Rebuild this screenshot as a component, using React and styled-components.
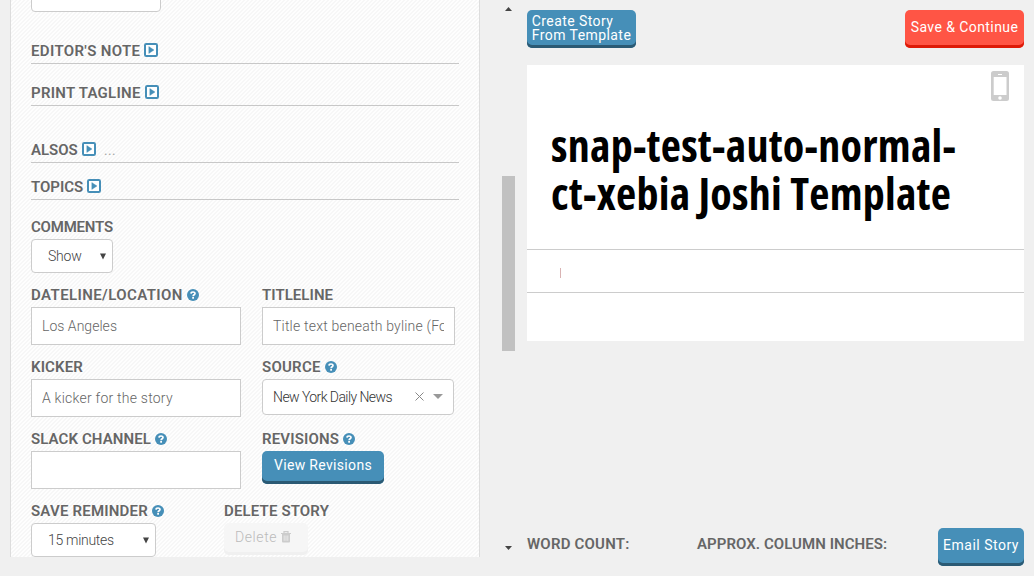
import React from 'react';
import styled, { createGlobalStyle } from 'styled-components';

const Global = createGlobalStyle`
  * { box-sizing: border-box; }
  body { margin: 0; background: #f0f0f0; font-family: Roboto, "Liberation Sans", sans-serif; }
`;

const Page = styled.div`
  display: flex;
  width: 1034px;
  height: 576px;
  overflow: hidden;
  background: #f0f0f0;
`;

const Panel = styled.section`
  width: 470px;
  height: 557px;
  margin-left: 10px;
  padding: 0 20px;
  overflow: hidden;
  border: solid #ddd;
  border-width: 0 1px;
  background: #fff linear-gradient(135deg, #f7f7f7 25%, #fefefe 25%, #fefefe 50%, #f7f7f7 50%, #f7f7f7 75%, #fefefe 75%) 0 0 / 4px 4px;
`;

const Label = styled.div`
  display: flex;
  align-items: center;
  height: 20px;
  font-size: 15px;
  line-height: 20px;
  font-weight: 600;
  color: #666;
  white-space: nowrap;
  letter-spacing: ${p => p.$ls || 0}px;
  svg { margin-left: 4px; flex: none; }
`;

const Section = styled.div`
  width: 428px;
  height: ${p => p.$h}px;
  display: flex;
  align-items: flex-end;
  padding-bottom: 2px;
  border-bottom: 1px solid #c8c8c8;
  svg { margin-bottom: 2px; }
`;

const Dots = styled.span`
  margin-left: 8px;
  color: #aaa;
  font-weight: 400;
`;

const Row = styled.div`
  display: flex;
  height: 72px;
  margin-top: ${p => p.$mt || 0}px;
`;

const Field = styled.div`
  width: ${p => p.$w}px;
  padding-top: ${p => p.$top || 0}px;
`;

const TextBox = styled.div`
  width: ${p => p.$w}px;
  height: 38px;
  margin-top: 2px;
  padding: 0 10px;
  border: 1px solid #ccc;
  background: #fff;
`;

const Value = styled.div`
  overflow: hidden;
  font-size: 14px;
  line-height: 37px;
  font-weight: 300;
  color: #666;
  white-space: nowrap;
  letter-spacing: ${p => p.$ls || 0}px;
`;

const Select = styled.div`
  display: flex;
  align-items: center;
  justify-content: space-between;
  width: ${p => p.$w}px;
  height: 34px;
  margin-top: 2px;
  padding: 0 6px 0 16px;
  border: 1px solid #ccc;
  border-radius: 4px;
  background: #fff;
  font-size: 14px;
  font-weight: 300;
  color: #444;
  letter-spacing: ${p => p.$ls || 0}px;
`;

const ClippedSelect = styled(Select)`
  height: 34px;
  margin-top: -22px;
`;

const ComboBox = styled(Select)`
  height: 36px;
  padding: 0 10px;
  font-size: 14px;
  color: #333;
`;

const ComboIcons = styled.span`
  display: flex;
  align-items: center;
  gap: 9px;
  padding-bottom: 1px;
`;

const Button = styled.div`
  display: flex;
  align-items: center;
  justify-content: center;
  width: ${p => p.$w}px;
  height: ${p => p.$h}px;
  margin-top: ${p => p.$mt || 0}px;
  padding-bottom: ${p => p.$pb || 3}px;
  border-radius: 5px;
  background: ${p => (p.$red ? '#ff5545' : '#468fb8')};
  box-shadow: inset 0 -3px 0 ${p => (p.$red ? '#dd1a08' : '#2b5a74')};
  font-size: 14px;
  line-height: 14px;
  color: #fff;
  white-space: pre;
  letter-spacing: ${p => p.$ls || 0}px;
`;

const DisabledButton = styled(Button)`
  justify-content: flex-start;
  padding-left: 11px;
  background: #f6f6f6;
  box-shadow: inset 0 -3px 0 #f0f0f0;
  font-weight: 300;
  color: #bbb;
  svg { margin-left: 4px; }
`;

const Scroll = styled.div`
  display: flex;
  flex-direction: column;
  align-items: center;
  width: 13px;
  height: 557px;
  margin-left: 22px;
  padding-top: 7px;
  svg { flex: none; }
`;

const Thumb = styled.div`
  width: 13px;
  height: 175px;
  margin: 165px 0 195px;
  background: #c1c1c1;
`;

const Main = styled.main`
  width: 497px;
  margin-left: 12px;
`;

const Toolbar = styled.div`
  display: flex;
  justify-content: space-between;
  height: 65px;
  padding-top: 10px;
  width: 497px;
`;

const Preview = styled.article`
  height: 276px;
  background: #fff;
`;

const PhoneBar = styled.div`
  display: flex;
  justify-content: flex-end;
  height: 56px;
  padding: 6px 15px 0 0;
`;

const Headline = styled.h1`
  height: 128px;
  margin: 0;
  padding-left: 24px;
  font-family: "Open Sans", "Noto Sans", sans-serif;
  font-stretch: 75%;
  font-size: 44px;
  line-height: 48px;
  font-weight: 700;
  color: #000;
  white-space: pre;
  letter-spacing: 0.25px;
`;

const Body = styled.div`
  height: 44px;
  padding: 18px 0 0 33px;
  border: solid #ccc;
  border-width: 1px 0;
`;

const Caret = styled.div`
  width: 1px;
  height: 10px;
  background: #d9b3b3;
`;

const Footer = styled.footer`
  display: flex;
  margin-top: 187px;
`;

const Stat = styled.div`
  width: ${p => p.$w}px;
  padding-top: 6px;
`;

const PlayBox = () => (
  <svg width="14" height="14" viewBox="0 0 14 14">
    <rect x="1" y="1" width="12" height="12" rx="1.2" fill="#fff" stroke="#468fb8" strokeWidth="2" />
    <path d="M4.8 3.6v6.8l5.2-3.4z" fill="#468fb8" stroke="#468fb8" strokeWidth=".4" />
  </svg>
);

const Help = () => (
  <svg width="12" height="12" viewBox="0 0 12 12">
    <circle cx="6" cy="6" r="6" fill="#468fb8" />
    <path d="M4 4.6C4.1 2.5 8 2.5 8 4.5 8 5.8 6.1 5.7 6.1 7.2" fill="none" stroke="#fff" strokeWidth="1.7" />
    <rect x="5.2" y="8" width="1.8" height="1.7" fill="#fff" />
  </svg>
);

const Down = () => (
  <svg width="6" height="7" viewBox="0 0 6 7"><path d="M0 0.5h6L3 6.5z" fill="#444" /></svg>
);

const Trash = () => (
  <svg width="10" height="12" viewBox="0 0 10 12">
    <path d="M3 2V.7h4V2M0 2.5h10" fill="none" stroke="#ccc" strokeWidth="1.2" />
    <path d="M1 3h8v7.5q0 1-1 1H2q-1 0-1-1z" fill="#ccc" />
    <path d="M3.2 4.5v5.3M5 4.5v5.3M6.8 4.5v5.3" stroke="#f6f6f6" strokeWidth=".7" />
  </svg>
);

export default function App() {
  return (
    <Page>
      <Global />
      <Panel>
        <ClippedSelect $w={130} />
        <Section $h={52}><Label $ls={0.35}>EDITOR'S NOTE<PlayBox /></Label></Section>
        <Section $h={42}><Label $ls={0.27}>PRINT TAGLINE<PlayBox /></Label></Section>
        <Section $h={57}><Label>ALSOS<PlayBox /><Dots>...</Dots></Label></Section>
        <Section $h={37}><Label>TOPICS<PlayBox /></Label></Section>
        <Field $w={428} $top={17}>
          <Label $ls={-0.2}>COMMENTS</Label>
          <Select $w={82} $ls={-0.2}>Show<Down /></Select>
        </Field>
        <Row $mt={12}>
          <Field $w={231}>
            <Label $ls={0.4}>DATELINE/LOCATION<Help /></Label>
            <TextBox $w={210}><Value $ls={0.03}>Los Angeles</Value></TextBox>
          </Field>
          <Field $w={197}>
            <Label $ls={0.05}>TITLELINE</Label>
            <TextBox $w={193}><Value $ls={0.2}>Title text beneath byline (For example)</Value></TextBox>
          </Field>
        </Row>
        <Row>
          <Field $w={231}>
            <Label $ls={0.15}>KICKER</Label>
            <TextBox $w={210}><Value $ls={0.23}>A kicker for the story</Value></TextBox>
          </Field>
          <Field $w={197}>
            <Label $ls={0.25}>SOURCE<Help /></Label>
            <ComboBox $w={192} $ls={-0.57}>
              New York Daily News
              <ComboIcons>
                <svg width="9" height="9" viewBox="0 0 9 9"><path d="M.5.5l8 8M8.5.5l-8 8" stroke="#888" /></svg>
                <svg width="10" height="5" viewBox="0 0 10 5"><path d="M0 0h10L5 5z" fill="#999" /></svg>
              </ComboIcons>
            </ComboBox>
          </Field>
        </Row>
        <Row>
          <Field $w={231}>
            <Label $ls={0.1}>SLACK CHANNEL<Help /></Label>
            <TextBox $w={210} />
          </Field>
          <Field $w={197}>
            <Label $ls={0.15}>REVISIONS<Help /></Label>
            <Button $w={122} $h={33} $mt={2} $pb={5} $ls={0.33}>View Revisions</Button>
          </Field>
        </Row>
        <Row>
          <Field $w={193}>
            <Label $ls={0.2}>SAVE REMINDER<Help /></Label>
            <Select $w={125} $ls={-0.3}>15 minutes<Down /></Select>
          </Field>
          <Field $w={197}>
            <Label $ls={0.15}>DELETE STORY</Label>
            <DisabledButton $w={84} $h={32} $mt={2} $pb={4} $ls={0.6}>Delete<Trash /></DisabledButton>
          </Field>
        </Row>
      </Panel>
      <Scroll>
        <svg width="7" height="4" viewBox="0 0 7 4"><path d="M0 4L3.5 0L7 4z" fill="#444" /></svg>
        <Thumb />
        <svg width="7" height="4" viewBox="0 0 7 4"><path d="M0 0h7L3.5 4z" fill="#444" /></svg>
      </Scroll>
      <Main>
        <Toolbar>
          <Button $w={109} $h={38} $ls={0.43}>{'Create Story\nFrom Template'}</Button>
          <Button $w={119} $h={38} $pb={4} $ls={0.42} $red>{'Save & Continue'}</Button>
        </Toolbar>
        <Preview>
          <PhoneBar>
            <svg width="18" height="30" viewBox="0 0 18 30">
              <rect width="18" height="30" rx="2.5" fill="#ccc" />
              <rect x="2.7" y="6" width="12.8" height="18" fill="#fff" />
              <rect x="7" y="3" width="4" height="1" fill="#fff" />
              <circle cx="9" cy="27" r="1.8" fill="#fff" />
            </svg>
          </PhoneBar>
          <Headline>{'snap-test-auto-normal-\nct-xebia Joshi Template'}</Headline>
          <Body><Caret /></Body>
        </Preview>
        <Footer>
          <Stat $w={170}><Label $ls={0.2}>WORD COUNT:</Label></Stat>
          <Stat $w={241}><Label $ls={0.06}>APPROX. COLUMN INCHES:</Label></Stat>
          <Button $w={86} $h={38} $pb={4} $ls={0.5}>Email Story</Button>
        </Footer>
      </Main>
    </Page>
  );
}
